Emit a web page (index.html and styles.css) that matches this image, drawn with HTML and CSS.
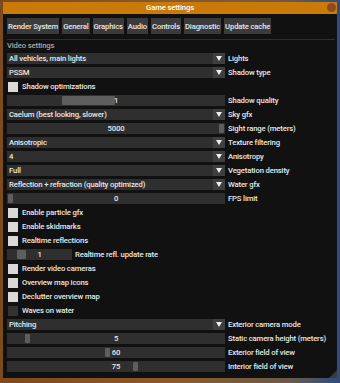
FILE: index.html
```html
<!DOCTYPE html>
<html lang="en">
<head>
    <meta charset="UTF-8">
    <title>Game settings</title>
    <link rel="stylesheet" href="styles.css">
</head>
<body>
    <div class="window">
        <div class="titlebar">
            <span>Game settings</span>
            <span class="close"></span>
        </div>
        <div class="content">
            <div class="tabs">
                <button class="tab">Render System</button>
                <button class="tab">General</button>
                <button class="tab">Graphics</button>
                <button class="tab">Audio</button>
                <button class="tab">Controls</button>
                <button class="tab">Diagnostic</button>
                <button class="tab">Update cache</button>
            </div>
            <div class="separator"></div>
            <div class="section-title">Video settings</div>

            <div class="rows">
                <div class="row">
                    <div class="combo"><span class="combo-text">All vehicles, main lights</span><span class="arrow"></span></div>
                    <span class="label">Lights</span>
                </div>
                <div class="row">
                    <div class="combo"><span class="combo-text">PSSM</span><span class="arrow"></span></div>
                    <span class="label">Shadow type</span>
                </div>
                <div class="row">
                    <span class="check"></span>
                    <span class="label">Shadow optimizations</span>
                </div>
                <div class="row">
                    <div class="slider">
                        <span class="grab" style="left: 55px; width: 53px;"></span>
                        <span class="value">1</span>
                    </div>
                    <span class="label">Shadow quality</span>
                </div>
                <div class="row">
                    <div class="combo"><span class="combo-text">Caelum (best looking, slower)</span><span class="arrow"></span></div>
                    <span class="label">Sky gfx</span>
                </div>
                <div class="row">
                    <div class="slider">
                        <span class="grab" style="left: 212px;"></span>
                        <span class="value">5000</span>
                    </div>
                    <span class="label">Sight range (meters)</span>
                </div>
                <div class="row">
                    <div class="combo"><span class="combo-text">Anisotropic</span><span class="arrow"></span></div>
                    <span class="label">Texture filtering</span>
                </div>
                <div class="row">
                    <div class="combo"><span class="combo-text">4</span><span class="arrow"></span></div>
                    <span class="label">Anisotropy</span>
                </div>
                <div class="row">
                    <div class="combo"><span class="combo-text">Full</span><span class="arrow"></span></div>
                    <span class="label">Vegetation density</span>
                </div>
                <div class="row">
                    <div class="combo"><span class="combo-text">Reflection + refraction (quality optimized)</span><span class="arrow"></span></div>
                    <span class="label">Water gfx</span>
                </div>
                <div class="row">
                    <div class="slider">
                        <span class="grab" style="left: 1px;"></span>
                        <span class="value">0</span>
                    </div>
                    <span class="label">FPS limit</span>
                </div>
                <div class="row">
                    <span class="check"></span>
                    <span class="label">Enable particle gfx</span>
                </div>
                <div class="row">
                    <span class="check"></span>
                    <span class="label">Enable skidmarks</span>
                </div>
                <div class="row">
                    <span class="check"></span>
                    <span class="label">Realtime reflections</span>
                </div>
                <div class="row">
                    <div class="slider small">
                        <span class="grab wide" style="left: 10px;"></span>
                        <span class="value">1</span>
                    </div>
                    <span class="label">Realtime refl. update rate</span>
                </div>
                <div class="row">
                    <span class="check"></span>
                    <span class="label">Render video cameras</span>
                </div>
                <div class="row">
                    <span class="check"></span>
                    <span class="label">Overview map icons</span>
                </div>
                <div class="row">
                    <span class="check"></span>
                    <span class="label">Declutter overview map</span>
                </div>
                <div class="row">
                    <span class="check off"></span>
                    <span class="label">Waves on water</span>
                </div>
                <div class="row">
                    <div class="combo"><span class="combo-text">Pitching</span><span class="arrow"></span></div>
                    <span class="label">Exterior camera mode</span>
                </div>
                <div class="row">
                    <div class="slider">
                        <span class="grab" style="left: 18px;"></span>
                        <span class="value">5</span>
                    </div>
                    <span class="label">Static camera height (meters)</span>
                </div>
                <div class="row">
                    <div class="slider">
                        <span class="grab" style="left: 98px;"></span>
                        <span class="value">60</span>
                    </div>
                    <span class="label">Exterior field of view</span>
                </div>
                <div class="row">
                    <div class="slider">
                        <span class="grab" style="left: 126px;"></span>
                        <span class="value">75</span>
                    </div>
                    <span class="label">Interior field of view</span>
                </div>
            </div>
        </div>
        <span class="grip"></span>
    </div>
</body>
</html>
```

FILE: styles.css
```css
:root {
--bg: #111111;
--frame: #2f2f2f;
--frame-btn: #3f3f3f;
--grab: #5e5e5e;
--text: #e8e8e8;
--muted: #a8a8a8;
--title: #c97a08;
}

* {
box-sizing: border-box;
}

body {
margin: 0;
width: 340px;
height: 383px;
overflow: hidden;
font-family: Roboto, "Noto Sans", sans-serif;
font-weight: 500;
font-size: 7.7px;
letter-spacing: -0.15px;
color: var(--text);
background: linear-gradient(90deg, #7b4a1e 0%, #8a5a2c 50%, #6a5a4a 85%, #2a4d80 100%);
}

.window {
position: relative;
margin: 2px 3px 0;
height: 376px;
background-color: var(--bg);
}

.titlebar {
position: relative;
height: 12px;
line-height: 12px;
text-align: center;
background-color: var(--title);
color: #fff;
}

.close {
position: absolute;
top: 1px;
right: 1px;
width: 9px;
height: 9px;
border-radius: 50%;
background-color: #8f4a1e;
}

.content {
padding: 4px 2px 0 4px;
}

.tabs {
display: flex;
gap: 3px;
}

.tab {
height: 16px;
padding: 0 1px;
border: none;
border-radius: 0;
background-color: #3b3b3b;
color: var(--text);
font: inherit;
letter-spacing: inherit;
}

.separator {
height: 1px;
margin-top: 5px;
background-color: #2e2e2e;
}

.section-title {
height: 11px;
line-height: 11px;
color: var(--muted);
margin-bottom: 2px;
}

.rows {
display: flex;
flex-direction: column;
gap: 3px;
}

.row {
display: flex;
align-items: center;
height: 11px;
gap: 3px;
}

.combo, .slider {
position: relative;
flex: none;
width: 218px;
height: 11px;
background-color: var(--frame);
display: flex;
align-items: center;
}

.combo-text {
flex: 1;
padding-left: 2px;
white-space: nowrap;
overflow: hidden;
}

.arrow {
width: 12px;
height: 11px;
background-color: var(--frame-btn);
position: relative;
}

.arrow::after {
content: "";
position: absolute;
left: 3px;
top: 3px;
border-left: 3px solid transparent;
border-right: 3px solid transparent;
border-top: 5px solid #eee;
}

.grab {
position: absolute;
top: 1px;
width: 5px;
height: 9px;
border-radius: 1px;
background-color: var(--grab);
}

.grab.wide {
width: 9px;
}

.value {
width: 100%;
text-align: center;
position: relative;
}

.slider.small {
width: 65px;
}

.check {
flex: none;
width: 10px;
height: 10px;
margin: 0 1px;
background-color: #d9d9d9;
}

.check.off {
background-color: #333;
}

.label {
white-space: nowrap;
}

.grip {
position: absolute;
right: 0;
bottom: 0;
width: 0;
height: 0;
border-left: 8px solid transparent;
border-bottom: 8px solid #3a3a3a;
}
```
